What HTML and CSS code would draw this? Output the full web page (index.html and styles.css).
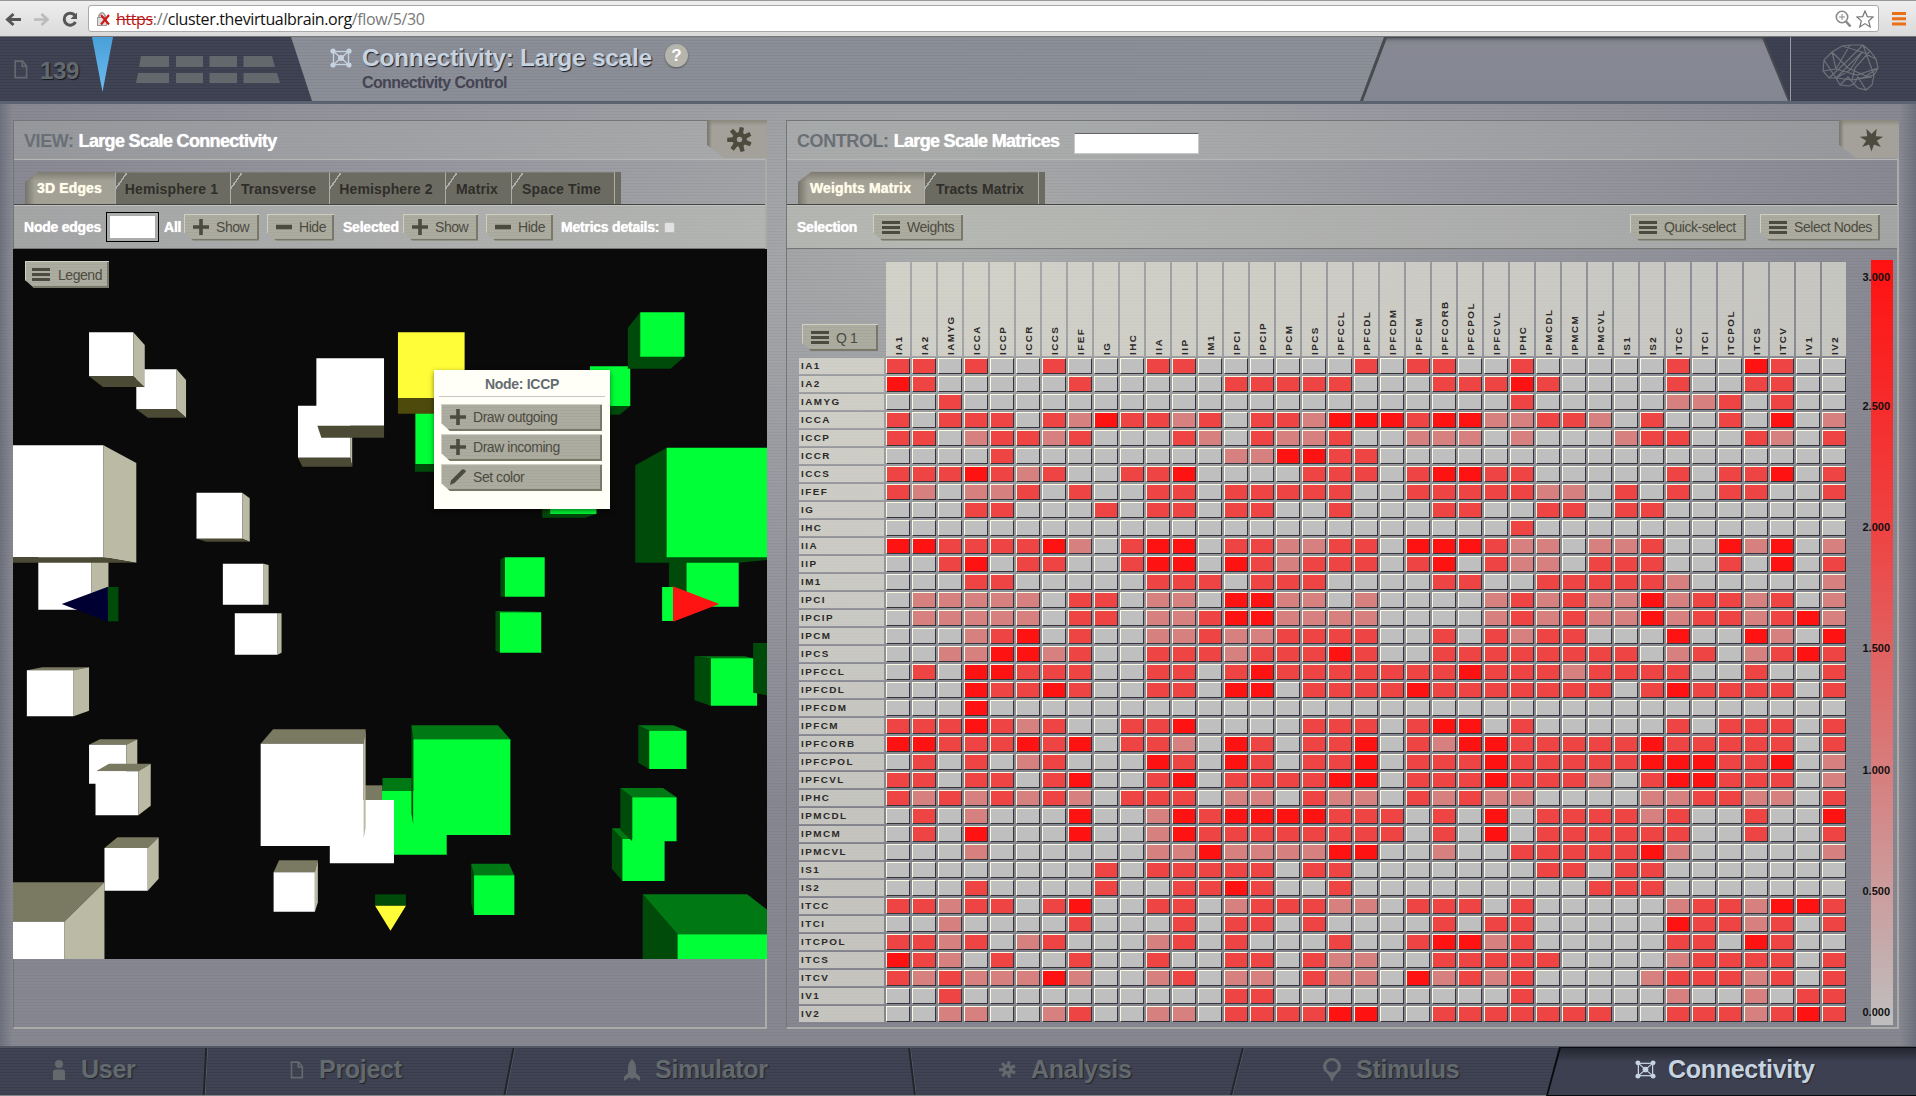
FILE: index.html
```html
<!DOCTYPE html>
<html lang="en">
<head>
<meta charset="utf-8">
<title>Connectivity: Large scale</title>
<link rel="stylesheet" href="styles.css">
</head>
<body>
<svg class="defs" width="0" height="0">
  <symbol id="net" viewBox="0 0 22 20">
    <g fill="none" stroke="currentColor" stroke-width="1.3"><rect x="3.5" y="3.5" width="15" height="13"/><path d="M3 3 19 17M19 3 3 17"/></g>
    <g fill="currentColor"><circle cx="3" cy="3" r="2.6"/><circle cx="19" cy="3" r="2.6"/><circle cx="3" cy="17" r="2.6"/><circle cx="19" cy="17" r="2.6"/><circle cx="11" cy="10" r="3"/></g>
  </symbol>
  <symbol id="doc" viewBox="0 0 14 19"><path d="M1.2 1.2H8.6L12.6 6V17.6H1.2ZM8.3 1.5V6.4H12.4" fill="none" stroke="currentColor" stroke-width="1.7"/></symbol>
  <symbol id="gear" viewBox="-12 -12 24 24">
    <g fill="currentColor" transform="rotate(12)"><path id="tooth" d="M-2.200-11.800H1.800L2.400-4H-2.400Z"/><use href="#tooth" transform="rotate(51.4)"/><use href="#tooth" transform="rotate(102.8)"/><use href="#tooth" transform="rotate(154.3)"/><use href="#tooth" transform="rotate(205.7)"/><use href="#tooth" transform="rotate(257.1)"/><use href="#tooth" transform="rotate(308.6)"/></g>
    <circle r="4.800" fill="none" stroke="currentColor" stroke-width="4.4"/>
  </symbol>
  <symbol id="plus" viewBox="0 0 16 16"><path d="M6.2 0H9.8V6.2H16V9.8H9.8V16H6.2V9.8H0V6.2H6.2Z" fill="currentColor"/></symbol>
  <symbol id="minus" viewBox="0 0 16 16"><path d="M0 5.8H16V10.2H0Z" fill="currentColor"/></symbol>
  <symbol id="bars" viewBox="0 0 18 13"><path d="M0 0H18V3H0ZM0 5H18V8H0ZM0 10H18V13H0Z" fill="currentColor"/></symbol>
  <symbol id="pencil" viewBox="0 0 16 16"><path d="M0 16 1 11.5 12 .5Q14.5-.5 16 2.5L4.500 14Z" fill="currentColor"/></symbol>
</svg>

<div class="browser">
  <svg class="nav-arrows" viewBox="0 0 88 36" width="88" height="36">
    <path d="M21 18.500H8M13.500 13 7.500 18.500 13.500 24" fill="none" stroke="#555" stroke-width="3"/>
    <path d="M34 18.500H47M41.500 13 47.500 18.500 41.500 24" fill="none" stroke="#bbb" stroke-width="2.600"/>
    <path d="M75 14.500A6 6 0 1 0 75.500 21" fill="none" stroke="#555" stroke-width="3"/><path d="M77 11.500V18H70.500Z" fill="#555"/>
  </svg>
  <div class="urlbar">
    <svg viewBox="0 0 16 16" width="16" height="16"><path d="M3 7V4.500Q6-1 9 4.500V7" fill="none" stroke="#999" stroke-width="1.600"/><rect x="1.500" y="6.500" width="9" height="8" fill="#ddd" stroke="#999"/><path d="M5 4 13 13.500M13 4 5 13.500" stroke="#d01818" stroke-width="2.200"/></svg>
    <span class="url"><s>https</s><i>://</i>cluster.thevirtualbrain.org<i>/flow/5/30</i></span>
    <svg class="zoomico" viewBox="0 0 17 18" width="17" height="18"><circle cx="7" cy="7" r="5.700" fill="none" stroke="#888" stroke-width="1.600"/><path d="M4 7H10M7 4V10" stroke="#888"/><path d="M11 11.500 15.500 16.500" stroke="#888" stroke-width="2.600"/></svg>
    <svg viewBox="0 0 18 18" width="18" height="18"><path d="M9 1 11.300 6.600 17 7 12.700 10.900 14.200 17 9 13.600 3.800 17 5.300 10.900 1 7 6.700 6.600Z" fill="#fff" stroke="#777" stroke-width="1.200"/></svg>
  </div>
  <svg class="menu" viewBox="0 0 14 14" width="14" height="14"><path d="M0 0H14V3H0ZM0 5.200H14V8.200H0ZM0 10.400H14V13.400H0Z" fill="#ea6f17"/></svg>
</div>

<header class="top">
  <div class="top-left">
    <svg class="ic-doc" width="14" height="19"><use href="#doc"/></svg>
    <span class="count">139</span>
    <svg class="status" viewBox="90 37 200 64" width="200" height="64">
      <defs><linearGradient id="sky" x1="0" x2="0" y1="0" y2="1"><stop offset="0" stop-color="#4aa0d8"/><stop offset="1" stop-color="#6bbcf0"/></linearGradient></defs>
      <path d="M91 37H112L101.500 92Z" fill="url(#sky)"/>
      <path d="M140 56H168V67H138ZM175 56H202V67H175ZM208.500 56H236V67H208.500ZM242.500 56H271L274 67H242.500ZM137 73H168V83H135ZM175 73H202V83H175ZM208.500 73H236V83H208.500ZM242.500 73H276L279 83H242.500Z" fill="#62686c"/>
    </svg>
  </div>
  <div class="title">
    <svg class="ic-net" width="22" height="20"><use href="#net"/></svg>
    <div class="title-text"><h1>Connectivity: Large scale</h1><p>Connectivity Control</p></div>
    <span class="help">?</span>
  </div>
  <div class="slot-edge"><div class="slot"></div></div>
  <div class="brand">
    <svg viewBox="0 0 58 48" width="58" height="48" fill="none" stroke="#6c7278" stroke-width="1.200"><path d="M20 2 28 1 41 1 48 7 54 15 56 24 52 31 50 41 44 46 36 44 32 40 27 42 18 41 14 34 7 34 1 27 2 16 10 8ZM10 8 26 24 44 32 56 24M20 2 40 8 28 26 14 34M28 1 14 25 1 27M41 1 22 20 7 34M48 7 33 24 30 36M2 16 14 34 40 8 54 15M14 25 35 31 56 24M30 36 52 31 41 1M14 34 30 36 50 33M18 41 26 33 32 40 36 33 44 46M10 8 14 25"/></svg>
  </div>
</header>

<main>
  <section class="panel left">
    <div class="panel-head"><b>VIEW:</b><h2>Large Scale Connectivity</h2>
      <span class="corner"><svg width="25" height="25"><use href="#gear"/></svg></span></div>
    <div class="tabs">
      <a class="on" style="width:90px">3D Edges</a><a style="width:115px">Hemisphere 1</a><a style="width:99px">Transverse</a><a style="width:116px">Hemisphere 2</a><a style="width:66px">Matrix</a><a style="width:103px">Space Time</a><i></i>
    </div>
    <div class="tools">
      <label class="w82">Node edges</label><span class="field"></span><label class="w20">All</label>
      <a class="btn w74"><svg width="16" height="16"><use href="#plus"/></svg>Show</a><a class="btn w68 m8"><svg width="16" height="16"><use href="#minus"/></svg>Hide</a>
      <label class="w60 m9">Selected</label>
      <a class="btn w74"><svg width="16" height="16"><use href="#plus"/></svg>Show</a><a class="btn w68 m8"><svg width="16" height="16"><use href="#minus"/></svg>Hide</a>
      <label class="m8 w103">Metrics details:</label><span class="check"></span>
    </div>
    <div class="scene">
      <svg viewBox="13 249 754 710" width="754" height="710" preserveAspectRatio="none">
        <rect x="13" y="249" width="754" height="710" fill="#0a0a0a"/>
        <g transform="matrix(.49745 0 0 .33333 0 240)">
          <path d="M274 388H355V508H274Z" fill="#fff"/><path d="M355 388 374 420V533L355 508Z" fill="#bbbba5"/><path d="M274 508H355L374 533H297Z" fill="#4b4a35"/>
          <path d="M179 277H268V409H179Z" fill="#fff"/><path d="M268 277 291 315V441L268 409Z" fill="#bbbba5"/><path d="M179 409H268L291 441H207Z" fill="#4b4a35"/>
          <path d="M599 497H704V653H599Z" fill="#fff"/><path d="M704 560H708V680L704 653Z" fill="#bbbba5"/><path d="M599 653H704L708 680H608Z" fill="#4b4a35"/>
          <path d="M636 355H772V557H636Z" fill="#fff"/><path d="M638 557H772V593H646Z" fill="#4b4a35"/>
          <path d="M835 500H900V673H835Z" fill="#00ff37"/><path d="M834 673H900V695H834Z" fill="#004a0a"/>
          <path d="M800 277H934V475H800Z" fill="#fffd38"/><path d="M800 475H934V521H800Z" fill="#4d4a0b"/>
          <path d="M1186 379H1267V498H1186Z" fill="#00ff37"/><path d="M1200 498H1267L1246 524H1180Z" fill="#004a0a"/>
          <path d="M1287 217 1262 264V386H1348L1376 350 1287 340Z" fill="#004a0a"/><path d="M1287 217H1376V350H1287Z" fill="#00ff37"/>
          <path d="M1090 790H1199V822L1176 833H1090Z" fill="#004a0a"/><path d="M1106 790H1199V822H1106Z" fill="#00ff37"/>
          <path d="M77 950H184V1109H77Z" fill="#fff"/><path d="M184 950H218V1080L184 1109Z" fill="#bbbba5"/>
          <path d="M20 616H208V952H20Z" fill="#fff"/><path d="M208 616 274 669V968L208 952Z" fill="#bbbba5"/><path d="M20 952H208L274 968H26L20 962Z" fill="#4b4a35"/>
          <path d="M395 758H487V896H395Z" fill="#fff"/><path d="M487 758 502 775V905L487 896Z" fill="#bbbba5"/><path d="M395 896H487L502 905H415Z" fill="#4b4a35"/>
          <path d="M448 971H530V1094H448Z" fill="#fff"/><path d="M530 971 540 975V1094H530Z" fill="#bbbba5"/>
          <path d="M1006 958 1015 952V1070H1006Z" fill="#004a0a"/><path d="M1015 952H1095V1070H1015Z" fill="#00ff37"/>
          <path d="M1345 960H1380V1100L1345 1080Z" fill="#004a0a"/><path d="M1380 960H1485V1100H1380Z" fill="#00ff37"/>
          <path d="M1340 623 1277 676V968H1485L1542 960V940H1340Z" fill="#004a0a"/><path d="M1340 623H1545V952H1340Z" fill="#00ff37"/>
          <path d="M217 1041H238V1144H217Z" fill="#004a0a"/><path d="M124 1092 217 1040V1145Z" fill="#000033"/>
          <path d="M1331 1041H1354V1143H1331Z" fill="#00ff37"/><path d="M1446 1092 1353 1039V1145Z" fill="#ff1414"/>
        </g>
        <g transform="matrix(.49745 0 0 .33333 0 600)">
          <path d="M472 40H558V164H472Z" fill="#fff"/><path d="M558 40H566V158L558 164Z" fill="#bbbba5"/>
          <path d="M996 34H1005V158L996 152Z" fill="#004a0a"/><path d="M996 34H1088L1005 37Z" fill="#007914"/><path d="M1005 37H1088V158H1005Z" fill="#00ff37"/>
          <path d="M54 211 85 202H179L148 211Z" fill="#7a7961"/><path d="M54 211H148V349H54Z" fill="#fff"/><path d="M148 211 179 202V332L148 349Z" fill="#bbbba5"/>
          <path d="M1396 169 1429 175V317L1396 301Z" fill="#004a0a"/><path d="M1396 169H1497L1514 175H1429Z" fill="#007914"/><path d="M1429 175H1522V317H1429Z" fill="#00ff37"/><path d="M1514 129H1545V287L1514 278Z" fill="#004a0a"/>
          <path d="M179 434 201 418H276L254 434Z" fill="#7a7961"/><path d="M179 434H254V551H179Z" fill="#fff"/><path d="M254 434 276 418V500H254Z" fill="#bbbba5"/>
          <path d="M193 514 219 491H303L278 514Z" fill="#7a7961"/><path d="M192 514H278V646H192Z" fill="#fff"/><path d="M278 514 303 491V617L278 646Z" fill="#bbbba5"/>
          <path d="M210 744 236 712H319L297 744Z" fill="#7a7961"/><path d="M210 744H297V872H210Z" fill="#fff"/><path d="M297 744 319 712V836L297 872Z" fill="#bbbba5"/>
          <path d="M20 847H210L129 965H20Z" fill="#7a7961"/><path d="M20 965H129V1080H20Z" fill="#fff"/><path d="M129 965 210 847V1080H129Z" fill="#bbbba5"/>
          <path d="M734 556H769V600H734Z" fill="#7a7961"/><path d="M769 534H828V573H769Z" fill="#007914"/><path d="M768 573H898V764H768Z" fill="#00ff37"/><path d="M663 600H792V790H663Z" fill="#fff"/>
          <path d="M524 431 549 388H735L731 431Z" fill="#7a7961"/><path d="M524 431H731V738H524Z" fill="#fff"/><path d="M731 431 735 388V684L731 716Z" fill="#bbbba5"/>
          <path d="M827 376 831 418V676L827 640Z" fill="#004a0a"/><path d="M827 376H1001L1026 418H831Z" fill="#007914"/><path d="M831 418H1026V705H831Z" fill="#00ff37"/>
          <path d="M550 817 561 781H639L633 817Z" fill="#7a7961"/><path d="M550 817H633V935H550Z" fill="#fff"/><path d="M633 817 639 781V907L633 935Z" fill="#bbbba5"/>
          <path d="M947 791 953 826V945L947 909Z" fill="#004a0a"/><path d="M947 791H1023L1034 826H953Z" fill="#007914"/><path d="M953 826H1034V945H953Z" fill="#00ff37"/>
          <path d="M1283 376 1305 392V507L1283 488Z" fill="#004a0a"/><path d="M1283 376H1354L1380 392H1305Z" fill="#007914"/><path d="M1305 392H1380V507H1305Z" fill="#00ff37"/>
          <path d="M1230 685 1251 717V843L1230 806Z" fill="#004a0a"/><path d="M1230 685H1250L1272 717H1251Z" fill="#007914"/><path d="M1251 717H1336V843H1251Z" fill="#00ff37"/>
          <path d="M1247 564 1271 592V724L1247 690Z" fill="#004a0a"/><path d="M1247 564H1333L1360 592H1271Z" fill="#007914"/><path d="M1271 592H1360V724H1271Z" fill="#00ff37"/>
          <path d="M1292 883 1362 1003V1080H1292Z" fill="#004a0a"/><path d="M1292 883H1502L1545 932V1003H1362Z" fill="#007914"/><path d="M1362 1003H1545V1080H1362Z" fill="#00ff37"/>
          <path d="M754 883H816V917H754Z" fill="#004a0a"/><path d="M754 917H816L785 992Z" fill="#fffd38"/>
        </g>
      </svg>
      <a class="btn legend"><svg width="18" height="13"><use href="#bars"/></svg>Legend</a>
      <div class="popup">
        <h3>Node: ICCP</h3>
        <a class="btn"><svg width="16" height="16"><use href="#plus"/></svg>Draw outgoing</a>
        <a class="btn"><svg width="16" height="16"><use href="#plus"/></svg>Draw incoming</a>
        <a class="btn"><svg width="16" height="16"><use href="#pencil"/></svg>Set color</a>
      </div>
    </div>
  </section>

  <section class="panel right">
    <div class="panel-head"><b>CONTROL:</b><h2>Large Scale Matrices</h2><span class="name-field"></span>
      <span class="corner"><svg viewBox="-12 -12 24 24" width="25" height="25"><path d="M0 11.500-2.300 4.700-9 7.200-5.100 1.200-11.200-2.600-4.100-3.200-5-10.400 0-5.200 5-10.400 4.100-3.200 11.200-2.600 5.100 1.200 9 7.200 2.300 4.700Z" fill="#4d4a3e"/></svg></span></div>
    <div class="tabs">
      <a class="on" style="width:126px">Weights Matrix</a><a style="width:114px">Tracts Matrix</a><i></i>
    </div>
    <div class="tools">
      <label class="w76">Selection</label><a class="btn w89"><svg width="18" height="13"><use href="#bars"/></svg>Weights</a>
      <a class="btn quick"><svg width="18" height="13"><use href="#bars"/></svg>Quick-select</a><a class="btn nodes"><svg width="18" height="13"><use href="#bars"/></svg>Select Nodes</a>
    </div>
    <div class="matrix-area">
      <div class="matrix" id="matrix"><div class="q"><a class="btn"><svg width="18" height="13"><use href="#bars"/></svg>Q 1</a></div></div>
      <div class="scale"><span>3.000</span><span>2.500</span><span>2.000</span><span>1.500</span><span>1.000</span><span>0.500</span><span>0.000</span></div>
    </div>
  </section>
</main>

<nav class="bottom">
  <a class="n-user"><svg viewBox="0 0 14 20" width="14" height="20"><ellipse cx="7" cy="4" rx="4" ry="4" fill="currentColor"/><path d="M1 12Q1 9.500 4 9.500H10Q13 9.500 13 12V20H1Z" fill="currentColor"/></svg>User</a>
  <a class="n-project"><svg width="14" height="18"><use href="#doc"/></svg>Project</a>
  <a class="n-sim"><svg viewBox="0 0 16 22" width="16" height="22"><path d="M8 0Q12 4 12 9V14L16 18V22L11 18.500 8 20 5 18.500 0 22V18L4 14V9Q4 4 8 0Z" fill="currentColor"/></svg>Simulator</a>
  <a class="n-ana"><svg width="17" height="17"><use href="#gear"/></svg>Analysis</a>
  <a class="n-stim"><svg viewBox="0 0 18 24" width="18" height="24"><path fill-rule="evenodd" d="M9 0A9 8.500 0 0 1 16.500 13Q12 16 9 24 6 16 1.500 13A9 8.500 0 0 1 9 0ZM9 2.600A5.700 6 0 1 0 9 14.600 5.700 6 0 1 0 9 2.600" fill="currentColor"/></svg>Stimulus</a>
  <div class="active-wrap"><a class="n-conn"><svg width="21" height="19"><use href="#net"/></svg>Connectivity</a></div>
</nav>
<script src="matrix.js"></script>
</body>
</html>
```

FILE: styles.css
```css
* { box-sizing: border-box; }
body {
  margin: 0; width: 1916px; height: 1096px; overflow: hidden;
  display: flex; flex-direction: column;
  font-family: "Liberation Sans", Arial, sans-serif;
  background:
    repeating-linear-gradient(rgba(0,0,0,.035) 0 1px, transparent 1px 3px),
    linear-gradient(90deg, rgba(90,94,110,.55) 0, transparent 12px, transparent 1900px, rgba(90,94,110,.55) 1916px),
    radial-gradient(ellipse 1000px 560px at 950px 250px, #a9abab 0, #9b9ca2 42%, #8e8f98 78%, #868790 100%);
}
.defs { position: absolute; }
h1, h2, h3, p { margin: 0; }

.browser { height: 37px; flex: none; display: flex; align-items: center; background: linear-gradient(#efeeee, #dadada); border-top: 1px solid #9a9699; border-bottom: 1px solid #77777a; }
.nav-arrows { display: block; width: 88px; }
.urlbar { width: 1791px; height: 27px; background: #fff; border: 1px solid #a9a9ab; border-radius: 3px; display: flex; align-items: center; padding: 0 4px 0 7px; }
.url { font: 16px "Open Sans", "Noto Sans", sans-serif; letter-spacing: -.370px; color: #111; margin-left: 4px; }
.url s { color: #b81414; }
.url i { font-style: normal; color: #777; }
.zoomico { margin-left: auto; margin-right: 4px; }
.menu { margin-left: 13px; }

.top { height: 67px; flex: none; display: flex; align-items: flex-start; border-bottom: 3px solid #5b6270;
  background: repeating-linear-gradient(rgba(0,0,0,.04) 0 1px, transparent 1px 3px), linear-gradient(90deg, #8b8e97 0, #8b8f97 1500px, #3d4050 1500px, #3d4050 1916px); }
.top-left { width: 313px; height: 64px; padding-left: 14px; display: flex; background: repeating-linear-gradient(#3a3d4c 0 1px, #404354 1px 3px); clip-path: polygon(0 0, 291px 0, 312px 100%, 0 100%); color: #636a6f; }
.top-left .ic-doc { margin-top: 23px; }
.count { margin: 19px 0 0 12px; width: 51px; font: bold 24px/30px "Liberation Sans"; text-shadow: 1px 1px 1px #16171e; letter-spacing: -.300px; }
.title { width: 1047px; height: 64px; display: flex; padding: 0 0 0 17px; color: #c6d3e0; }
.ic-net { margin-top: 11px; }
.title-text { margin-left: 10px; }
.title h1 { font-size: 24.500px; line-height: 30px; padding-top: 6px; white-space: nowrap; letter-spacing: -.280px; text-shadow: 1px 1px 1px #20212a; }
.title p { color: #454453; font-size: 16px; font-weight: bold; line-height: 20px; letter-spacing: -.620px; }
.help { margin: 7px 0 0 13px; width: 23px; height: 23px; border-radius: 50%; background: #b5b5ae; color: #fff; font: bold 17px/23px "Liberation Sans"; text-align: center; box-shadow: 0 1px 2px #555; }
.slot-edge { width: 430px; height: 64px; background: #484a50; clip-path: polygon(24px 0, 404px 0, 430px 100%, 0 100%); }
.slot { width: 430px; height: 64px; background: linear-gradient(#505258 0, #7f828b 4px, #878893 8px, #848792); clip-path: polygon(27px 1px, 402px 1px, 428px 100%, 3px 100%); }
.brand { width: 126px; height: 64px; border-left: 1px solid #9a9ca4; padding: 7px 0 0 31px; background: repeating-linear-gradient(#3a3d4c 0 1px, #404354 1px 3px); }

main { display: flex; gap: 19px; height: 942px; flex: none; padding: 16px 17px 17px 13px; }
.panel { height: 909px; border: 1px solid #747676; border-right: 2px solid #abaca7; border-bottom: 2px solid #abaca7; display: flex; flex-direction: column; }
.left { width: 754px; }
.right { width: 1113px; }
.panel-head { height: 39px; flex: none; display: flex; align-items: flex-start; padding-left: 10px; background: rgba(186,188,182,.3); border-bottom: 1px solid #b6b7b4; font-size: 18px; line-height: 22px; }
.panel-head b { color: #696f75; margin: 9px 5px 0 0; letter-spacing: -.420px; }
.panel-head h2 { font-size: 18px; color: #fff; margin-top: 9px; letter-spacing: -.670px; text-shadow: 0 0 1px #fff; }
.corner { margin: -1px -2px 0 auto; width: 60px; height: 38px; display: grid; place-items: center; padding-left: 4px; color: #4d4a3e; background: linear-gradient(90deg, #7d7b70 0 1px, transparent 5px), linear-gradient(#8a887c, #a3a19a 6px); clip-path: polygon(0 0, 100% 0, 100% 100%, 17px 100%, 0 25px); }
.name-field { margin: 12px 0 0 15px; width: 125px; height: 21px; background: #fff; border: 1px solid #c8c8c8; border-top: 1px solid #666; }

.tabs { height: 45px; flex: none; display: flex; padding: 12px 0 0 11px; border-bottom: 1px solid #454545; }
.tabs a { height: 32px; text-align: center; font: bold 14px/32px "Liberation Sans"; letter-spacing: .130px; color: #2f2e29; border-top: 1px solid #7b7b76; border-left: 1px solid #adada8; padding-right: 3px; background: linear-gradient(125deg, #6c6b62 0 8px, #b0b0aa 8px 9.500px, #6c6b62 9.500px); }
.tabs a.on { color: #fffce8; line-height: 33px; padding-right: 1px; text-shadow: 0 0 1px #fffce8; background: linear-gradient(180deg, rgba(80,78,66,.45), transparent 9px), linear-gradient(90deg, #76746a, #a3a196 10px, #a3a196); border: 0; clip-path: polygon(13px 0, 100% 0, 100% 100%, 0 100%, 0 10px); }
.tabs i { width: 7px; height: 32px; background: #6c6b62; border-left: 1px solid #adada8; }

.tools { height: 44px; flex: none; display: flex; align-items: center; padding-left: 10px; background: rgba(202,204,194,.42); border-top: 1px solid #c1c2bd; border-bottom: 1px solid #747676; color: #fff; font-size: 14px; font-weight: bold; }
.tools label { flex: none; white-space: nowrap; text-shadow: 0 0 1px #fff; letter-spacing: -.230px; }
.field { width: 53px; height: 30px; margin-right: 5px; background: #fff; border: 1px solid #000; box-shadow: inset 0 0 0 3px #a9abad; }
.w82 { width: 82px; } .w20 { width: 20px; } .w60 { width: 60px; } .w103 { width: 103px; } .w76 { width: 76px; }
.w74 { width: 75px; } .w68 { width: 67px; } .w89 { width: 90px; } .m8 { margin-left: 8px; } .m9 { margin-left: 9px; }
.check { width: 11px; height: 11px; background: #e2e2e2; border: 1px solid #bbb; border-radius: 2px; }

.btn { flex: none; height: 27px; display: flex; align-items: center; gap: 7px; padding: 0 0 0 9px; color: #4c4b40; font: 14px "Liberation Sans"; letter-spacing: -.450px; white-space: nowrap; background: repeating-linear-gradient(#a6a69b 0 1px, #acaca1 1px 3px); box-shadow: inset 1px 1px 0 #cfcfc2, inset -2px -2px 0 #7a7969; clip-path: polygon(0 0, 100% 0, 100% 100%, 9px 100%, 0 19px); }
.quick { width: 116px; margin-left: auto; }
.nodes { width: 120px; margin: 0 17px 0 14px; }

.scene { position: relative; width: 754px; height: 710px; margin-left: -1px; flex: none; }
.scene > svg { display: block; }
.legend { position: absolute; left: 12px; top: 12px; width: 84px; padding-left: 7px; gap: 8px; }
.popup { position: absolute; left: 421px; top: 121px; width: 176px; height: 139px; padding: 0 5px; background: #fffff8; box-shadow: 0 2px 5px rgba(0,0,0,.5); }
.popup h3 { height: 27px; margin-bottom: 7px; border-bottom: 1px solid #c9c9c3; color: #656b70; font-size: 14px; line-height: 28px; text-align: center; letter-spacing: -.280px; }
.popup .btn { margin: 0 3px 3px 2px; padding: 0 0 1px 9px; }

.matrix-area { display: flex; padding: 11px 0 0 12px; }
.matrix { display: grid; grid-template-columns: 85px repeat(37, 24px); grid-template-rows: 94px repeat(37, 16px); gap: 2px; flex: none; padding-top: 2px; }
.q { padding: 62px 0 0 3px; }
.q .btn { width: 76px; }
.ch, .rh { background: rgba(236,234,220,.62); color: #2a2927; font-weight: bold; font-size: 9.900px; letter-spacing: 1.450px; white-space: nowrap; }
.ch { writing-mode: vertical-rl; transform: rotate(180deg); line-height: 26px; padding-top: 1px; }
.rh { line-height: 16px; padding-left: 2px; }
.c { border: 1px solid #33343a; border-top-color: #fbfae2; border-left-color: #fbfae2; background: #bfbfbf; }
.v1 { background: #d68080; } .v2 { background: #ee4444; } .v3 { background: #ff1212; }
.scale { width: 34px; height: 765px; margin-left: 13px; display: flex; flex-direction: column; justify-content: space-between; padding: 10px 3px 6px 0; font: bold 11px/14px "Liberation Sans"; text-align: right; color: #111; background: linear-gradient(#ff1111, #ee4444 36%, #d68080 68%, #bfbfbf) right / 22px 100% no-repeat; }
.scale span:first-child { margin-bottom: 8px; }

.bottom { height: 50px; flex: none; display: flex; border-top: 2px solid #525763; border-bottom: 1px solid #85868a; background: repeating-linear-gradient(#3a3d4c 0 1px, #404354 1px 3px); }
.bottom a { position: relative; display: flex; align-items: center; color: #636a6e; font-size: 25px; font-weight: bold; text-shadow: 1px 1px 1px #22232b; padding-bottom: 4px; letter-spacing: -.280px; gap: 15px; flex: none; }
.bottom > a::after { content: ""; position: absolute; right: -2px; top: 0; width: 2px; height: 47px; background: #22242c; border-right: 1px solid #555a66; transform: skewX(-11deg); }
.n-user { width: 205px; padding-left: 52px; }
.bottom .n-user::after { transform: skewX(-3deg); }
.n-project { width: 304px; padding-left: 85px; }
.n-sim { width: 403px; padding-left: 115px; }
.bottom .n-sim::after { transform: skewX(7deg); }
.n-ana { width: 325px; padding-left: 87px; }
.bottom .n-ana::after { transform: skewX(-14deg); }
.n-stim { width: 309px; padding-left: 86px; }
.bottom .n-stim::after { display: none; }
.active-wrap { width: 370px; height: 49px; margin-top: -1px; background: #0a0b0f; clip-path: polygon(13px 0, 100% 0, 100% 100%, 0 100%); }
.active-wrap a { height: 47px; margin-top: 1px; padding-left: 89px; gap: 12px; color: #c6d3e0; background: linear-gradient(rgba(15,16,22,.55), transparent 14px), #3d4050; clip-path: polygon(15px 0, 100% 0, 100% 100%, 2px 100%); }
```

FILE: matrix.js
```js
const names = "IA1 IA2 IAMYG ICCA ICCP ICCR ICCS IFEF IG IHC IIA IIP IM1 IPCI IPCIP IPCM IPCS IPFCCL IPFCDL IPFCDM IPFCM IPFCORB IPFCPOL IPFCVL IPHC IPMCDL IPMCM IPMCVL IS1 IS2 ITCC ITCI ITCPOL ITCS ITCV IV1 IV2".split(" ");
const weights = [
  "220200200022 0000002022002 000002003200",
  "320000020000 0222220002223 200002002200",
  "002000000000 0000000000002 000001120200",
  "202220213221 2022133323311 221020020301",
  "220122120002 1021120011101 000122002102",
  "000020000000 0113322000000 000000000000",
  "222321200223 0000222023322 000002022302",
  "210112020022 0222220022222 110202022002",
  "000220002022 0220020002200 220220000000",
  "000000000000 0000000000002 000000000000",
  "332222310233 0221122033321 101120031301",
  "002302200233 0321222023021 102220020302",
  "000220000022 2022200002200 222221000001",
  "011111022011 0331101000012 121131221201",
  "011111022011 2331111000012 121131221231",
  "000123020011 2112222002021 220003003103",
  "001133120022 2122232002222 222201201232",
  "020332220022 0232222222322 212222002002",
  "000322320022 0330222232222 222023222202",
  "000300000000 0000000000000 000000000000",
  "222321200223 0000222023302 000002022202",
  "332223230221 0320223021332 222232222202",
  "020201200032 0320223022232 222233322301",
  "220220230023 0222233022232 221023322201",
  "212121210222 0110211021211 000011221102",
  "020100030013 2333322202030 222212002003",
  "020300030013 2222222202030 222222002002",
  "000100000011 3111133001002 222231000001",
  "000000002022 2220220000000 220220000000",
  "000200002002 2320020000000 002220000000",
  "221220230022 0122211022202 000001221332",
  "001000020002 0220200002022 000003221202",
  "221201200012 0200020023312 000002203200",
  "321020020020 0220211002222 200001222202",
  "212111310012 0110211031212 000012221202",
  "002000000000 0220000000002 000001001022",
  "001100120011 0222233002222 222002221232"
];
const grid = document.getElementById("matrix");
const add = (cls, text) => {
  const el = document.createElement("div");
  el.className = cls;
  el.textContent = text || "";
  grid.appendChild(el);
};
names.forEach(n => add("ch", n));
weights.forEach((row, i) => {
  add("rh", names[i]);
  [...row.replace(/ /g, "")].forEach(v => add("c v" + v));
});
```
